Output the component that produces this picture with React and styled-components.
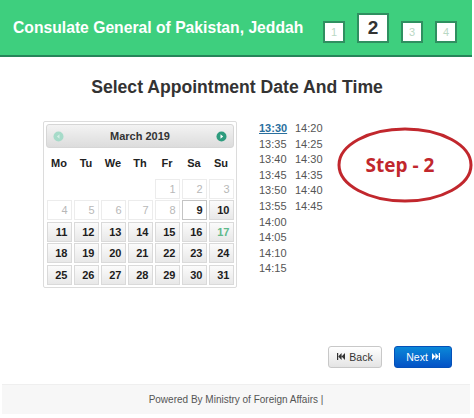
import React from "react";
import styled, { createGlobalStyle } from "styled-components";

const GlobalStyle = createGlobalStyle`
  html, body {
    margin: 0;
    padding: 0;
    background: #fff;
    font-family: "Liberation Sans", Arial, sans-serif;
  }
`;

const STEPS = [1, 2, 3, 4];
const WEEKDAYS = ["Mo", "Tu", "We", "Th", "Fr", "Sa", "Su"];
const TIMES = [
  "13:30", "13:35", "13:40", "13:45", "13:50", "13:55", "14:00", "14:05", "14:10", "14:15",
  "14:20", "14:25", "14:30", "14:35", "14:40", "14:45"
];

// March 2019 starts on a Friday
const buildDays = () => {
  const cells = [null, null, null, null];
  for (let d = 1; d <= 31; d++) cells.push(d);
  return cells;
};

const Page = styled.div`
  width: 474px;
  min-height: 418px;
  display: flex;
  flex-direction: column;
`;

const Header = styled.header`
  height: 55px;
  margin-right: 2px;
  background: #3ecf7e;
  border-bottom: 2px solid #26865a;
  display: flex;
  align-items: center;
  justify-content: space-between;
  padding: 0 15px 0 13px;
`;

const Brand = styled.h1`
  margin: 0;
  color: #fff;
  font-size: 15.7px;
  font-weight: bold;
`;

const Steps = styled.div`
  align-self: flex-end;
  padding-bottom: 12px;
  display: flex;
  align-items: flex-end;
  gap: 12px;
`;

const StepBox = styled.div`
  box-sizing: border-box;
  width: ${p => (p.$active ? "32px" : "22px")};
  height: ${p => (p.$active ? "30px" : "22px")};
  border: 2px solid #2f8f60;
  background: #fff;
  display: flex;
  align-items: center;
  justify-content: center;
  color: ${p => (p.$active ? "#333" : "#b9d8c4")};
  font-size: ${p => (p.$active ? "19px" : "11px")};
  font-weight: ${p => (p.$active ? "bold" : "normal")};
`;

const Title = styled.h2`
  margin: 20px 0 0;
  text-align: center;
  color: #333;
  font-size: 17.6px;
  line-height: 20px;
  font-weight: bold;
`;

const Row = styled.div`
  position: relative;
  margin-top: 24px;
  display: flex;
  align-items: flex-start;
  padding-left: 43px;
`;

const Calendar = styled.div`
  box-sizing: border-box;
  width: 194px;
  padding: 2px;
  border: 1px solid #dcdcdc;
  border-radius: 2px;
`;

const CalHead = styled.div`
  height: 24px;
  box-sizing: border-box;
  border: 1px solid #d6d6d6;
  border-radius: 3px;
  background: linear-gradient(#f3f3f3, #dcdcdc);
  display: flex;
  align-items: center;
  padding: 0 6px;
`;

const Month = styled.div`
  flex: 1;
  text-align: center;
  color: #333;
  font-size: 11px;
  font-weight: bold;
`;

const NavDot = styled.svg`
  width: 11px;
  height: 11px;
  flex: none;
`;

const Grid = styled.div`
  display: grid;
  grid-template-columns: repeat(7, 25px);
  column-gap: 2px;
  row-gap: 1.5px;
  justify-content: center;
`;

const WeekDay = styled.div`
  height: 29px;
  line-height: 30px;
  text-align: center;
  color: #222;
  font-size: 11px;
  font-weight: bold;
`;

const Day = styled.div`
  box-sizing: border-box;
  height: 20px;
  line-height: 18px;
  padding-right: 3px;
  text-align: right;
  font-size: 11px;
  border: 1px solid ${p => (p.$kind === "off" ? "#ececec" : p.$kind === "selected" ? "#c4c4c4" : "#dadada")};
  background: ${p =>
    p.$kind === "off" || p.$kind === "selected" ? "#fff" : "linear-gradient(#fbfbfb, #e8e8e8)"};
  color: ${p => (p.$kind === "off" ? "#b8b8b8" : p.$kind === "today" ? "#5fb98a" : "#1d1d1d")};
  font-weight: ${p => (p.$kind === "off" ? "normal" : "bold")};
`;

const Times = styled.div`
  margin-left: 22px;
  display: grid;
  grid-auto-flow: column;
  grid-template-rows: repeat(10, 15.6px);
  grid-template-columns: 36px 36px;
  font-size: 11px;
  color: #555;
`;

const Time = styled.a`
  line-height: 15.6px;
  color: ${p => (p.$picked ? "#2a6f9e" : "#555")};
  font-weight: ${p => (p.$picked ? "bold" : "normal")};
  text-decoration: ${p => (p.$picked ? "underline" : "none")};
`;

const Annotation = styled.div`
  position: absolute;
  left: 337px;
  top: 6px;
  width: 136px;
  height: 76px;
  display: flex;
  align-items: center;
  justify-content: center;
`;

const Ring = styled.svg`
  position: absolute;
  inset: 0;
`;

const StepLabel = styled.span`
  position: relative;
  margin-right: 10px;
  color: #c1272d;
  font-family: "Open Sans", "Noto Sans", sans-serif;
  font-size: 19px;
  font-weight: bold;
`;

const Actions = styled.div`
  margin-top: 58px;
  display: flex;
  justify-content: flex-end;
  gap: 12px;
  padding-right: 22px;
`;

const Button = styled.button`
  box-sizing: border-box;
  height: 22px;
  padding: 0;
  border-radius: 3px;
  font-family: "Liberation Sans", Arial, sans-serif;
  font-size: 10.5px;
  display: flex;
  align-items: center;
  justify-content: center;
  gap: 4px;
  border: 1px solid ${p => (p.$primary ? "#0450b8" : "#c8c8c8")};
  background: ${p =>
    p.$primary ? "linear-gradient(#0a88d8, #0452c6)" : "linear-gradient(#ffffff, #e4e4e4)"};
  color: ${p => (p.$primary ? "#fff" : "#333")};
  width: ${p => (p.$primary ? "58px" : "54px")};
`;

const Footer = styled.footer`
  margin: 16px 4px 0 2px;
  height: 29px;
  background: #f7f7f7;
  border-top: 1px solid #efefef;
  display: flex;
  align-items: center;
  justify-content: center;
  color: #555;
  font-size: 10px;
`;

const BackIcon = () => (
  <svg width="8" height="7" viewBox="0 0 8 7">
    <rect x="0" y="0" width="1.2" height="7" fill="#333" />
    <path d="M4.6 0 L1.2 3.5 L4.6 7 Z M8 0 L4.6 3.5 L8 7 Z" fill="#333" />
  </svg>
);

const NextIcon = () => (
  <svg width="8" height="7" viewBox="0 0 8 7">
    <path d="M0 0 L3.4 3.5 L0 7 Z M3.4 0 L6.8 3.5 L3.4 7 Z" fill="#fff" />
    <rect x="6.8" y="0" width="1.2" height="7" fill="#fff" />
  </svg>
);

const dayKind = d => {
  if (d <= 8) return "off";
  if (d === 9) return "selected";
  if (d === 17) return "today";
  return "on";
};

export default function App() {
  const days = buildDays();
  return (
    <Page>
      <GlobalStyle />
      <Header>
        <Brand>Consulate General of Pakistan, Jeddah</Brand>
        <Steps>
          {STEPS.map(s => (
            <StepBox key={s} $active={s === 2}>
              {s}
            </StepBox>
          ))}
        </Steps>
      </Header>

      <Title>Select Appointment Date And Time</Title>

      <Row>
        <Calendar>
          <CalHead>
            <NavDot viewBox="0 0 11 11">
              <circle cx="5.5" cy="5.5" r="5" fill="#a6dbc9" />
              <path d="M6.5 3.2 L3.8 5.5 L6.5 7.8 Z" fill="#d4eee5" />
            </NavDot>
            <Month>March 2019</Month>
            <NavDot viewBox="0 0 11 11">
              <circle cx="5.5" cy="5.5" r="5" fill="#2e9c7e" />
              <path d="M4.5 3.2 L7.2 5.5 L4.5 7.8 Z" fill="#fff" />
            </NavDot>
          </CalHead>
          <Grid>
            {WEEKDAYS.map(w => (
              <WeekDay key={w}>{w}</WeekDay>
            ))}
            {days.map((d, i) =>
              d === null ? <div key={"e" + i} /> : <Day key={d} $kind={dayKind(d)}>{d}</Day>
            )}
          </Grid>
        </Calendar>

        <Times>
          {TIMES.map((t, i) => (
            <Time key={t} href="#" $picked={i === 0}>
              {t}
            </Time>
          ))}
        </Times>

        <Annotation>
          <Ring width="136" height="76" viewBox="0 0 136 76">
            <ellipse cx="68" cy="38" rx="66" ry="36" fill="none" stroke="#c1272d" strokeWidth="3" />
          </Ring>
          <StepLabel>Step - 2</StepLabel>
        </Annotation>
      </Row>

      <Actions>
        <Button>
          <BackIcon /> Back
        </Button>
        <Button $primary>
          Next <NextIcon />
        </Button>
      </Actions>

      <Footer>Powered By Ministry of Foreign Affairs |</Footer>
    </Page>
  );
}
